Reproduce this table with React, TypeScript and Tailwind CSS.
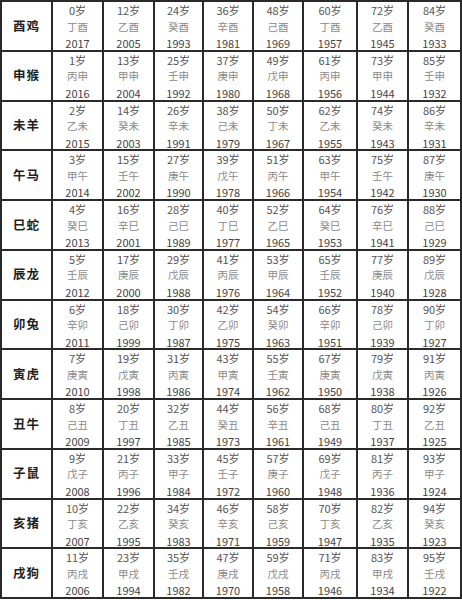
const STEMS = "甲乙丙丁戊己庚辛壬癸";
const BRANCHES = "子丑寅卯辰巳午未申酉戌亥";

const LABELS = ["酉鸡", "申猴", "未羊", "午马", "巳蛇", "辰龙", "卯兔", "寅虎", "丑牛", "子鼠", "亥猪", "戌狗"];

const BASE_YEAR = 2017;

function ganzhi(year: number) {
  const n = year - 4;
  return STEMS[((n % 10) + 10) % 10] + BRANCHES[((n % 12) + 12) % 12];
}

const font = { fontFamily: '"Noto Sans CJK SC", "Liberation Sans", sans-serif' };

function AgeCell({ age }: { age: number }) {
  const year = BASE_YEAR - age;
  return (
    <div className="bg-white flex flex-col items-center justify-center pt-[2px]">
      <span className="text-[11px] leading-[16.5px] text-[#555]">{age}岁</span>
      <span className="text-[10.5px] leading-[16.5px] text-[#8a8a8a]">{ganzhi(year)}</span>
      <span className="text-[11px] leading-[16.5px] text-[#444]">{year}</span>
    </div>
  );
}

export default function App() {
  return (
    <div className="w-[462px] h-[600px] bg-white" style={font}>
      <div className="grid grid-cols-[49px_49px_49px_47px_48px_48px_52px_49px_51px] auto-rows-[47.75px] gap-[2px] p-[2px] bg-[#2a2a2a]">
        {LABELS.map((label, i) => (
          <div key={label} className="contents">
            <div className="bg-white flex items-center justify-center">
              <span className="text-[12.5px] font-bold text-[#1f1f1f] tracking-[1px]">{label}</span>
            </div>
            {Array.from({ length: 8 }, (_, j) => (
              <AgeCell key={j} age={i + 12 * j} />
            ))}
          </div>
        ))}
      </div>
    </div>
  );
}
